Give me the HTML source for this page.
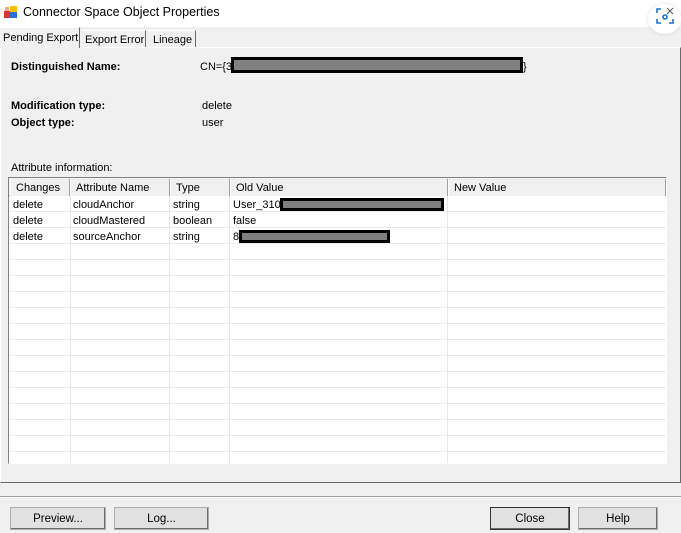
<!DOCTYPE html>
<html><head><style>
*{margin:0;padding:0;box-sizing:border-box}
body{width:681px;height:533px;overflow:hidden;background:#f0f0f0;font-family:"Liberation Sans",sans-serif;font-size:11px;color:#000;position:relative}
.a{position:absolute;white-space:nowrap}
.red{position:absolute;background:#808080;border:3px solid #000}
.btn{position:absolute;top:507px;height:23px;background:#e1e1e1;border:1px solid #adadad;box-shadow:inset -1px -1px 0 #6d6d6d;text-align:center;line-height:22px;font-size:11.5px}
.col{position:absolute;top:178px;height:285px;width:1px;background:#e6e6e6}
.hd{position:absolute;top:179px;height:17px;border-right:1px solid #a0a0a0;border-left:1px solid #fff;padding-left:5px;line-height:18px;background:#f0f0f0}
.t{margin-top:1px}
</style></head><body>
<div class="a" style="left:0;top:0;width:681px;height:27px;background:#fff"></div>
<svg class="a" style="left:4px;top:5px" width="14" height="14"><rect x="0" y="6" width="6" height="7" fill="#d33"/><rect x="6" y="1" width="7" height="7" fill="#f2c200"/><rect x="6" y="7" width="7" height="6" fill="#2b6fd6"/><rect x="1" y="2" width="4" height="4" fill="#ea8"/></svg>
<div class="a" style="left:23px;top:5px;font-size:12.5px">Connector Space Object Properties</div>
<div class="a" style="left:648px;top:4px;width:33px;height:30px;border-radius:50%;background:#fff;box-shadow:0 0 4px rgba(0,0,0,.12)"></div>
<svg class="a" style="left:655px;top:6px" width="20" height="20" fill="none" stroke="#1a6fd6" stroke-width="1.6"><path d="M2 7V3h4M2 13v4h4M18 13v4h-4"/><circle cx="10" cy="11" r="2"/><path d="M12 2l6 6M18 2l-6 6" stroke="#555" stroke-width="1"/></svg>
<div class="a" style="left:0;top:47px;width:681px;height:436px;border-top:1px solid #fff;border-right:1px solid #696969;border-bottom:1px solid #696969;border-left:1px solid #fff"></div>
<div class="a" style="left:0;top:27px;width:80px;height:21px;background:#f0f0f0;border-top:1px solid #fff;border-right:1px solid #696969;padding:4px 0 0 3px">Pending Export</div>
<div class="a" style="left:82px;top:30px;width:64px;height:17px;border-right:1px solid #696969;border-top:1px solid #fff;padding:3px 0 0 3px">Export Error</div>
<div class="a" style="left:148px;top:30px;width:48px;height:17px;border-right:1px solid #696969;border-top:1px solid #fff;padding:3px 0 0 5px">Lineage</div>
<div class="a" style="left:11px;top:61px;font-weight:bold">Distinguished Name:</div>
<div class="a" style="left:200px;top:61px">CN={3</div>
<div class="red" style="left:231px;top:57px;width:292px;height:16px"></div>
<div class="a" style="left:523px;top:61px">}</div>
<div class="a" style="left:11px;top:100px;font-weight:bold">Modification type:</div>
<div class="a" style="left:202px;top:100px">delete</div>
<div class="a" style="left:11px;top:117px;font-weight:bold">Object type:</div>
<div class="a" style="left:202px;top:117px">user</div>
<div class="a" style="left:11px;top:162px">Attribute information:</div>
<div class="a" style="left:8px;top:177px;width:659px;height:287px;border:1px solid #828282;border-right-color:#fff;border-bottom-color:#fff;background:#fff repeating-linear-gradient(#fff 0 15px,#ebebeb 15px 16px);background-position:0 18px"></div>
<div class="a" style="left:9px;top:178px;width:657px;height:18px;background:#f0f0f0;border-bottom:1px solid #a0a0a0"></div>
<div class="col" style="left:70px"></div><div class="col" style="left:169px"></div><div class="col" style="left:229px"></div><div class="col" style="left:447px"></div>
<div class="hd" style="left:10px;width:60px">Changes</div>
<div class="hd" style="left:70px;width:100px">Attribute Name</div>
<div class="hd" style="left:170px;width:60px">Type</div>
<div class="hd" style="left:230px;width:218px">Old Value</div>
<div class="hd" style="left:448px;width:218px">New Value</div>
<div class="a" style="left:13px;top:199px">delete</div><div class="a" style="left:73px;top:199px">cloudAnchor</div><div class="a" style="left:173px;top:199px">string</div><div class="a" style="left:233px;top:199px">User_310</div>
<div class="red" style="left:280px;top:198px;width:164px;height:13px"></div>
<div class="a" style="left:13px;top:215px">delete</div><div class="a" style="left:73px;top:215px">cloudMastered</div><div class="a" style="left:173px;top:215px">boolean</div><div class="a" style="left:233px;top:215px">false</div>
<div class="a" style="left:13px;top:231px">delete</div><div class="a" style="left:73px;top:231px">sourceAnchor</div><div class="a" style="left:173px;top:231px">string</div><div class="a" style="left:233px;top:231px">8</div>
<div class="red" style="left:239px;top:230px;width:151px;height:13px"></div>
<div class="a" style="left:0;top:496px;width:681px;height:2px;border-top:1px solid #a0a0a0;border-bottom:1px solid #fff"></div>
<div class="btn" style="left:10px;width:96px">Preview...</div>
<div class="btn" style="left:114px;width:95px">Log...</div>
<div class="btn" style="left:490px;width:80px;border-color:#333">Close</div>
<div class="btn" style="left:578px;width:80px">Help</div>
</body></html>
